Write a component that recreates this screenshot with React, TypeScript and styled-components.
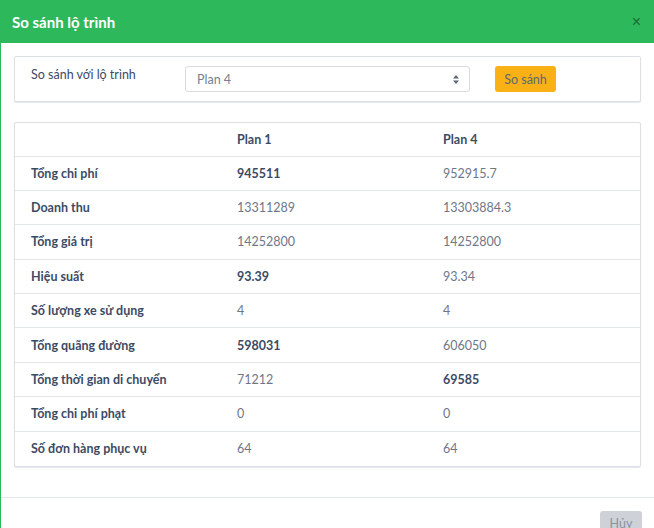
import styled, { createGlobalStyle } from "styled-components";

const GlobalStyle = createGlobalStyle`
  html, body {
    margin: 0;
    padding: 0;
    background: #fff;
    font-family: Lato, "Noto Sans", sans-serif;
    color: #3c4b64;
  }
`

const Modal = styled.div`
  width: 654px;
  height: 528px;
  overflow: hidden;
  display: flex;
  flex-direction: column;
  background: #fff;
  border-left: 1px solid #2eb85c;
  box-sizing: border-box;
`

const Header = styled.div`
  display: flex;
  align-items: center;
  justify-content: space-between;
  height: 43px;
  padding: 0 13px 0 12px;
  margin-left: -1px;
  background: #2eb85c;
  flex-shrink: 0;
`

const Title = styled.h5`
  margin: 0;
  font-size: 15px;
  font-weight: 700;
  color: #fff;
`

const Close = styled.button`
  border: 0;
  background: none;
  padding: 0;
  color: #1a6b37;
  font-size: 16px;
  line-height: 1;
  cursor: pointer;
`

const Body = styled.div`
  display: flex;
  flex-direction: column;
  gap: 20px;
  padding: 13px 13px 30px 13px;
  border-bottom: 1px solid #e4e7ea;
`

const Card = styled.div`
  border: 1px solid #dcdfe4;
  border-radius: 2px;
  box-shadow: 0 1px 1px rgba(60, 75, 100, 0.14);
  background: #fff;
`

const FormRow = styled.div`
  display: flex;
  align-items: flex-start;
  padding: 9px 17px 9px 16px;
  height: 26px;
`

const Label = styled.label`
  width: 154px;
  font-size: 12.5px;
  line-height: 16px;
  padding-top: 1px;
  color: #3c4b64;
`

const SelectBox = styled.div`
  display: flex;
  align-items: center;
  justify-content: space-between;
  width: 285px;
  height: 26px;
  box-sizing: border-box;
  padding: 0 10px 0 11px;
  border: 1px solid #d8dbe0;
  border-radius: 3px;
  font-size: 12.5px;
  color: #768192;
`

const CompareButton = styled.button`
  margin-left: 25px;
  height: 26px;
  width: 61px;
  border: 0;
  border-radius: 3px;
  background: #f9b115;
  color: #5c6873;
  font-family: inherit;
  font-size: 12.5px;
`

const Table = styled.table`
  width: 100%;
  border-collapse: collapse;
  font-size: 12.5px;
`

const Th = styled.th`
  height: 33px;
  padding: 0 16px;
  text-align: left;
  font-weight: 700;
  color: #3c4b64;
  box-sizing: border-box;
`

const Td = styled.td<{ $bold?: boolean }>`
  height: 34.4px;
  padding: 0 16px;
  font-weight: ${(p) => (p.$bold ? 700 : 400)};
  color: ${(p) => (p.$bold ? "#3c4b64" : "#6e7787")};
  border-top: 1px solid #e4e7ea;
  box-sizing: border-box;
`

const RowLabel = styled(Td)`
  width: 206px;
  font-weight: 700;
  color: #3c4b64;
`

const Footer = styled.div`
  display: flex;
  justify-content: flex-end;
  padding: 13px 12px 0;
`

const CancelButton = styled.button`
  width: 42px;
  height: 26px;
  border: 0;
  border-radius: 3px;
  background: #ced2d8;
  color: #8a93a2;
  font-family: inherit;
  font-size: 12.5px;
`

const rows: [string, string, string, number][] = [
  ["Tổng chi phí", "945511", "952915.7", 1],
  ["Doanh thu", "13311289", "13303884.3", 0],
  ["Tổng giá trị", "14252800", "14252800", 0],
  ["Hiệu suất", "93.39", "93.34", 1],
  ["Số lượng xe sử dụng", "4", "4", 0],
  ["Tổng quãng đường", "598031", "606050", 1],
  ["Tổng thời gian di chuyển", "71212", "69585", 2],
  ["Tổng chi phí phạt", "0", "0", 0],
  ["Số đơn hàng phục vụ", "64", "64", 0],
]

function Arrows() {
  return (
    <svg width="6" height="9" viewBox="0 0 6 9">
      <path d="M3 0 L6 3.5 H0 Z M3 9 L6 5.5 H0 Z" fill="#5c6873" />
    </svg>
  )
}

export default function App() {
  return (
    <>
      <GlobalStyle />
      <Modal>
        <Header>
          <Title>So sánh lộ trình</Title>
          <Close>×</Close>
        </Header>
        <Body>
          <Card>
            <FormRow>
              <Label>So sánh với lộ trình</Label>
              <SelectBox>
                <span>Plan 4</span>
                <Arrows />
              </SelectBox>
              <CompareButton>So sánh</CompareButton>
            </FormRow>
          </Card>
          <Card>
            <Table>
              <thead>
                <tr>
                  <Th></Th>
                  <Th style={{ width: 206 }}>Plan 1</Th>
                  <Th>Plan 4</Th>
                </tr>
              </thead>
              <tbody>
                {rows.map(([label, a, b, best]) => (
                  <tr key={label}>
                    <RowLabel>{label}</RowLabel>
                    <Td $bold={best === 1}>{a}</Td>
                    <Td $bold={best === 2}>{b}</Td>
                  </tr>
                ))}
              </tbody>
            </Table>
          </Card>
        </Body>
        <Footer>
          <CancelButton>Hủy</CancelButton>
        </Footer>
      </Modal>
    </>
  )
}
